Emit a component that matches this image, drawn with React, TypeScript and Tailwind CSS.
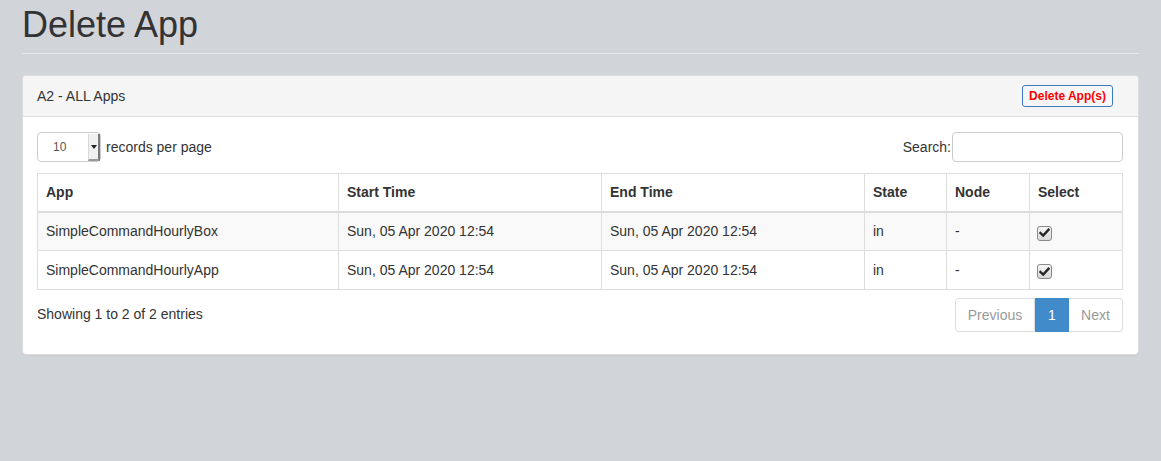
import React from "react";

function Check() {
  return (
    <span className="inline-flex h-[15px] w-[15px] items-center justify-center rounded-[3px] border border-[#8a8a8a] bg-gradient-to-b from-[#f6f6f6] to-[#d8d8d8] align-middle">
      <svg width="11" height="10" viewBox="0 0 11 10">
        <path d="M1.5 5 L4.2 7.6 L9.5 1.8" fill="none" stroke="#262626" strokeWidth="2.4" strokeLinecap="square" />
      </svg>
    </span>
  );
}

const rows = [
  { app: "SimpleCommandHourlyBox", start: "Sun, 05 Apr 2020 12:54", end: "Sun, 05 Apr 2020 12:54", state: "in", node: "-" },
  { app: "SimpleCommandHourlyApp", start: "Sun, 05 Apr 2020 12:54", end: "Sun, 05 Apr 2020 12:54", state: "in", node: "-" },
];

export default function App() {
  return (
    <div
      className="min-h-[461px] w-full bg-[#d1d4d9] text-[14px] text-[#333] pt-[5px]"
      style={{ fontFamily: '"Liberation Sans", Arial, sans-serif' }}
    >
      <div className="ml-[22px] mr-[22px]">
        <h1 className="text-[36px] leading-[40px] font-normal text-[#333]">Delete App</h1>
        <div className="mt-[8px] h-px bg-[#e9eaec]" />
        <div className="mt-[21px] rounded-[4px] border border-[#dddddd] bg-white shadow-[0_1px_1px_rgba(0,0,0,0.05)]">
          <div className="flex h-[41px] items-center justify-between rounded-t-[3px] border-b border-[#dddddd] bg-[#f5f5f5] pl-[14px] pr-[25px]">
            <span className="text-[14px] text-[#333]">A2 - ALL Apps</span>
            <button className="h-[22px] w-[91px] rounded-[3px] border border-[#3a7bc0] bg-[#f7f7f7] text-[12px] font-bold text-[#ff0000] leading-none">
              Delete App(s)
            </button>
          </div>
          <div className="pl-[14px] pr-[15px] pt-[15px] pb-[22px]">
            <div className="flex items-center justify-between">
              <div className="flex items-center">
                <div className="relative flex h-[30px] w-[64px] items-center rounded-[4px] border border-[#cccccc] bg-white">
                  <span className="ml-[15px] text-[12px] text-[#555]">10</span>
                  <span className="absolute right-0 top-[1px] flex h-[27px] w-[12px] items-center justify-center border-l border-[#d8d8d8] border-r-2 border-r-[#7a7a7a] border-b-2 border-b-[#9a9a9a] bg-[#f0f0f0]">
                    <svg width="6" height="4" viewBox="0 0 6 4"><path d="M0 0 L6 0 L3 4 Z" fill="#222" /></svg>
                  </span>
                </div>
                <span className="ml-[5px]">records per page</span>
              </div>
              <div className="flex items-center">
                <span>Search:</span>
                <input className="ml-[1px] h-[30px] w-[171px] rounded-[4px] border border-[#cccccc] bg-white outline-none" />
              </div>
            </div>
            <table className="mt-[11px] w-full table-fixed border-collapse">
              <colgroup>
                <col style={{ width: 301 }} />
                <col style={{ width: 263 }} />
                <col style={{ width: 263 }} />
                <col style={{ width: 82 }} />
                <col style={{ width: 83 }} />
                <col style={{ width: 93 }} />
              </colgroup>
              <thead>
                <tr>
                  {["App", "Start Time", "End Time", "State", "Node", "Select"].map((h) => (
                    <th key={h} className="h-[38px] border border-[#dddddd] border-b-2 px-[8px] text-left font-bold">
                      {h}
                    </th>
                  ))}
                </tr>
              </thead>
              <tbody>
                {rows.map((r, i) => (
                  <tr key={i} className={i === 0 ? "bg-[#f9f9f9]" : "bg-white"}>
                    <td className="h-[39px] border border-[#dddddd] px-[8px]">{r.app}</td>
                    <td className="border border-[#dddddd] px-[8px]">{r.start}</td>
                    <td className="border border-[#dddddd] px-[8px]">{r.end}</td>
                    <td className="border border-[#dddddd] px-[8px]">{r.state}</td>
                    <td className="border border-[#dddddd] px-[8px]">{r.node}</td>
                    <td className="border border-[#dddddd] px-[7px] pt-[2px]">
                      <Check />
                    </td>
                  </tr>
                ))}
              </tbody>
            </table>
            <div className="mt-[8px] flex items-center justify-between">
              <span className="-mt-[1px]">Showing 1 to 2 of 2 entries</span>
              <div className="flex h-[34px] text-[14px]">
                <span className="flex w-[80px] items-center justify-center rounded-l-[4px] border border-[#dddddd] bg-white text-[#999]">Previous</span>
                <span className="flex w-[34px] items-center justify-center border border-[#428bca] bg-[#428bca] text-white">1</span>
                <span className="flex w-[54px] items-center justify-center rounded-r-[4px] border border-l-0 border-[#dddddd] bg-white text-[#999]">Next</span>
              </div>
            </div>
          </div>
        </div>
      </div>
    </div>
  );
}
